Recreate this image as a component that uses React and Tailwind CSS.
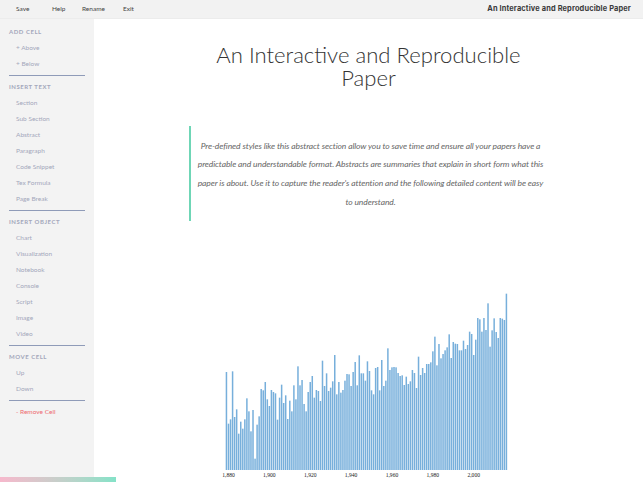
const tops = [258,413,400,256,393,370,443,407,428,400,337,376,436,372,518,416,391,309,313,288,340,360,312,318,322,401,335,296,351,328,399,344,376,298,340,241,298,282,354,376,318,288,270,335,312,315,345,224,300,262,315,305,286,207,325,288,320,312,284,264,265,300,258,228,298,208,262,262,284,226,255,313,325,246,243,313,222,300,284,187,252,244,243,244,261,270,268,297,272,294,286,252,261,306,212,267,246,261,234,234,229,196,152,238,174,217,204,193,184,145,216,168,173,174,193,193,164,189,177,137,144,207,161,96,100,137,96,132,52,182,133,97,138,156,96,98,102,23];

function Chart() {
  const labels = ["1,880", "1,900", "1,920", "1,940", "1,960", "1,980", "2,000"];
  return (
    <svg width="300" height="192" viewBox="0 0 300 192" className="block ml-[125px] mt-[65px]">
      {tops.map((t, i) => {
        const h = (552 - t) / 3;
        return <rect key={i} x={6.7 + i * 2.0435} y={184 - h} width="1.5" height={h} fill="#4a94cf" fillOpacity="0.75" />;
      })}
      {labels.map((l, i) => (
        <text key={l} x={9.5 + i * 40.87} y={191} textAnchor="middle" fontSize="5.6" fill="#222" fontFamily="'Liberation Serif', serif">{l}</text>
      ))}
    </svg>
  );
}

function Heading({ children }) {
  return <div className="h-4 pl-[9px] flex items-center text-[6px] leading-none font-bold tracking-[0.09em] uppercase text-[#a3a7bb]">{children}</div>;
}
function Item({ children }) {
  return <div className="h-4 pl-4 flex items-center text-[6.5px] leading-none text-[#a3a7bb]">{children}</div>;
}
function Rule() {
  return <div className="h-px mx-[9px] my-[3px] bg-[#8f9bb8]" />;
}

export default function App() {
  return (
    <div className="relative w-[643px] h-[482px] overflow-hidden bg-white font-['Lato',sans-serif]">
      <header className="h-[19px] bg-[#f2f2f2] border-b border-[#ececec] flex items-center text-[6.5px] text-[#444]">
        <span className="ml-4 w-[36px]">Save</span>
        <span className="w-[30px]">Help</span>
        <span className="w-[41px]">Rename</span>
        <span>Exit</span>
        <span className="ml-auto mr-3 font-['Inter',sans-serif] font-bold text-[7.4px] tracking-[0.02em] text-[#3a3a3a]">An Interactive and Reproducible Paper</span>
      </header>
      <div className="flex h-[463px]">
        <aside className="w-[94px] shrink-0 bg-[#f3f3f3] pt-[5px]">
          <Heading>Add Cell</Heading>
          <Item>+ Above</Item>
          <Item>+ Below</Item>
          <Rule />
          <Heading>Insert Text</Heading>
          <Item>Section</Item>
          <Item>Sub Section</Item>
          <Item>Abstract</Item>
          <Item>Paragraph</Item>
          <Item>Code Snippet</Item>
          <Item>Tex Formula</Item>
          <Item>Page Break</Item>
          <Rule />
          <Heading>Insert Object</Heading>
          <Item>Chart</Item>
          <Item>Visualization</Item>
          <Item>Notebook</Item>
          <Item>Console</Item>
          <Item>Script</Item>
          <Item>Image</Item>
          <Item>Video</Item>
          <Rule />
          <Heading>Move Cell</Heading>
          <Item>Up</Item>
          <Item>Down</Item>
          <Rule />
          <div className="h-4 pl-4 flex items-center text-[6.5px] leading-none text-[#ee6a70]">- Remove Cell</div>
        </aside>
        <main className="flex-1">
          <h1 className="mt-[24px] mx-auto w-[340px] text-center text-[22.1px] leading-[23px] font-light text-[#333]">An Interactive and Reproducible Paper</h1>
          <div className="mt-[37px] ml-[95px] w-[361px] h-[95px] border-l-2 border-[#6fd6b6] pt-[10.5px] text-center italic text-[8.5px] tracking-[-0.01em] leading-[18.7px] text-[#666]">
            Pre-defined styles like this abstract section allow you to save time and ensure all your papers have a<br />
            predictable and understandable format. Abstracts are summaries that explain in short form what this<br />
            paper is about. Use it to capture the reader's attention and the following detailed content will be easy<br />
            to understand.
          </div>
          <Chart />
        </main>
      </div>
      <div className="absolute left-0 bottom-0 w-[116px] h-[5px] bg-gradient-to-r from-[#f6b8cc] to-[#84e2c8]" />
    </div>
  );
}
